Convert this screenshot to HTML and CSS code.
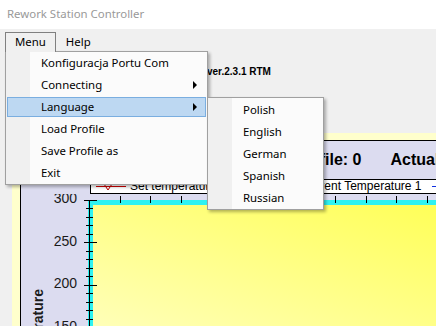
FILE: index.html
```html
<!DOCTYPE html>
<html lang="en">
<head>
    <meta charset="UTF-8">
    <title>Rework Station Controller</title>
    <link rel="stylesheet" href="styles.css">
</head>
<body>
    <div class="window">
        <div class="titlebar">Rework Station Controller</div>

        <div class="menubar">
            <span class="menubar-item open">Menu</span>
            <span class="menubar-item">Help</span>
        </div>

        <div class="client">
            <div class="version">ver.2.3.1 RTM</div>

            <div class="chart-frame">
                <div class="chart">
                    <div class="chart-header">
                        <span>Profile: 0</span>
                        <span>Actual Temperature: 0</span>
                    </div>

                    <div class="legend">
                        <div class="legend-item">
                            <svg class="legend-mark" width="30" height="13" viewBox="0 0 30 13">
                                <path d="M0 6.5H30" stroke="#d00000"/>
                                <path d="M8 4L12 10L16 4" fill="none" stroke="#c00000"/>
                            </svg>
                            <span>Set temperature</span>
                        </div>
                        <div class="legend-item">
                            <svg class="legend-mark" width="30" height="13" viewBox="0 0 30 13">
                                <path d="M0 6.5H30" stroke="#008000"/>
                            </svg>
                            <span>Current Temperature 1</span>
                        </div>
                        <div class="legend-item">
                            <svg class="legend-mark" width="30" height="13" viewBox="0 0 30 13">
                                <path d="M0 6.5H30" stroke="#1030e0"/>
                            </svg>
                            <span>Current Temperature 2</span>
                        </div>
                    </div>

                    <svg class="plot" width="415" height="132" viewBox="0 0 415 132">
                        <defs>
                            <linearGradient id="plotBg" x1="0" y1="1" x2="1" y2="0">
                                <stop offset="0" stop-color="#ffffb8"/>
                                <stop offset="1" stop-color="#ffff58"/>
                            </linearGradient>
                        </defs>
                        <rect x="67" y="6" width="348" height="126" fill="#2ef2f2"/>
                        <rect x="72" y="11" width="343" height="121" fill="url(#plotBg)"/>
                        <path d="M68.5 6V132" stroke="#000"/>
                        <!-- left axis ticks -->
                        <path stroke="#000" d="M63 6.5H76M65 14.5H72M65 23.5H72M65 31.5H72M65 40.5H72M63 48.5H76M65 57.5H72M65 65.5H72M65 74.5H72M65 82.5H72M63 91.5H76M65 99.5H72M65 108.5H72M65 116.5H72M65 125.5H72"/>
                        <!-- top axis ticks -->
                        <path stroke="#000" d="M99.5 2V9M129.5 2V9M160.5 2V9M191.5 2V9M222.5 2V9M252.5 2V9M283.5 2V9M314.5 2V9M345.5 2V9M375.5 2V9M406.5 2V9"/>
                        <g class="axis-labels">
                            <text x="56" y="9" text-anchor="end">300</text>
                            <text x="56" y="51.5" text-anchor="end">250</text>
                            <text x="56" y="94" text-anchor="end">200</text>
                            <text x="56" y="136.5" text-anchor="end">150</text>
                        </g>
                        <text class="axis-title" transform="translate(22,95) rotate(-90)" text-anchor="end">Temperature</text>
                    </svg>
                </div>
            </div>
        </div>

        <div class="dropdown main-menu">
            <div class="menu-item">Konfiguracja Portu Com</div>
            <div class="menu-item has-sub">Connecting</div>
            <div class="menu-item has-sub active">Language</div>
            <div class="menu-item">Load Profile</div>
            <div class="menu-item">Save Profile as</div>
            <div class="menu-item">Exit</div>
        </div>

        <div class="dropdown sub-menu">
            <div class="menu-item">Polish</div>
            <div class="menu-item">English</div>
            <div class="menu-item">German</div>
            <div class="menu-item">Spanish</div>
            <div class="menu-item">Russian</div>
        </div>
    </div>
</body>
</html>
```

FILE: styles.css
```css
body {
    margin: 0;
    width: 436px;
    height: 326px;
    overflow: hidden;
    background-color: #f0f0f0;
    font-family: 'Noto Sans', 'Open Sans', sans-serif;
    font-size: 11.4px;
    color: #000;
}
.window {
    position: relative;
    height: 326px;
    overflow: hidden;
}
.titlebar {
    height: 29px;
    line-height: 28px;
    padding-left: 7px;
    background-color: #fff;
    color: #999;
}
.menubar {
    height: 21px;
    display: flex;
    align-items: flex-start;
    padding-left: 5px;
}
.menubar-item {
    margin-top: 3px;
    height: 19px;
    line-height: 18px;
    padding: 0 9px;
    border: 1px solid transparent;
    border-bottom: none;
    box-sizing: content-box;
}
.menubar-item.open {
    position: relative;
    z-index: 3;
    border-color: #808080;
    background-color: #f0f0f0;
}
.client {
    padding-left: 12px;
}
.version {
    height: 83px;
    box-sizing: border-box;
    padding: 16px 0 0 195px;
    font-family: 'Liberation Sans', Arial, sans-serif;
    font-weight: bold;
    font-size: 10px;
    line-height: 12px;
}
.chart-frame {
    background-color: #ffffcc;
    padding: 7px 0 0 8px;
}
.chart {
    border-top: 1px solid #000;
    border-left: 1px solid #000;
    background-color: #dcdcf0;
    height: 200px;
}
.chart-header {
    height: 38px;
    display: flex;
    align-items: center;
    gap: 29px;
    padding-left: 272px;
    font-family: 'Liberation Sans', Arial, sans-serif;
    font-weight: bold;
    font-size: 16px;
    white-space: nowrap;
}
.legend {
    margin: 0 -40px 0 69px;
    height: 13px;
    padding-left: 5px;
    border: 1px solid #000;
    background-color: #fff;
    display: grid;
    grid-template-columns: 171px 165px 165px;
    font-family: 'Liberation Sans', Arial, sans-serif;
    font-size: 12px;
    line-height: 13px;
    white-space: nowrap;
}
.legend-item {
    display: flex;
    gap: 4px;
}
.legend-mark {
    display: block;
    flex: none;
}
.plot {
    display: block;
}
.axis-labels text {
    font-family: 'Liberation Sans', Arial, sans-serif;
    font-size: 14px;
    fill: #1a1a1a;
}
.axis-title {
    font-family: 'Liberation Sans', Arial, sans-serif;
    font-weight: bold;
    font-size: 14px;
    fill: #1a1a1a;
}
.dropdown {
    position: absolute;
    z-index: 2;
    box-sizing: border-box;
    display: flex;
    flex-direction: column;
    padding: 0 1px;
    border: 1px solid #a0a0a0;
    background: linear-gradient(90deg, #f0f0f0 24px, #fbfbfb 24px);
    box-shadow: 2px 2px 3px rgba(0, 0, 0, 0.3);
}
.main-menu {
    left: 5px;
    top: 51px;
    width: 203px;
}
.sub-menu {
    left: 207px;
    top: 97px;
    width: 117px;
    padding-top: 1px;
}
.menu-item {
    height: 20px;
    margin: 1px 0;
    box-sizing: border-box;
    border: 1px solid transparent;
    padding: 0 8px 0 33px;
    line-height: 18px;
    display: flex;
    align-items: center;
    justify-content: space-between;
    white-space: nowrap;
}
.menu-item.has-sub::after {
    content: "";
    border-left: 4px solid #000;
    border-top: 4px solid transparent;
    border-bottom: 4px solid transparent;
}
.menu-item.active {
    background-color: #bdd8f2;
    border-color: #7aaee0;
}
```
